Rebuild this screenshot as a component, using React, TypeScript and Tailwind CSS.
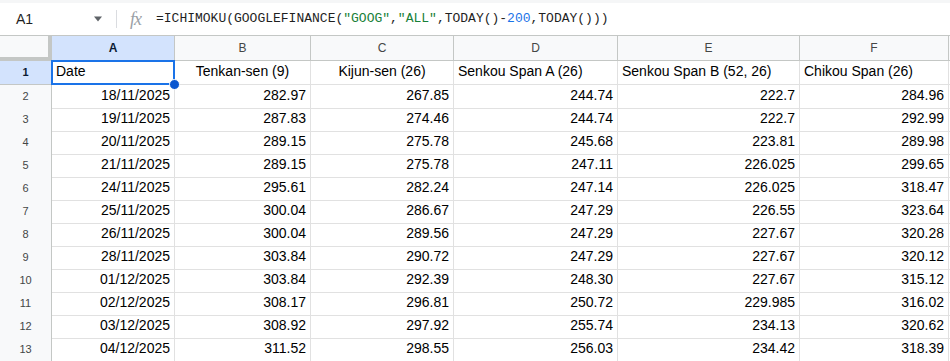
const cols = ["A", "B", "C", "D", "E", "F"];

const headers: [string, string][] = [
  ["Date", "left"],
  ["Tenkan-sen (9)", "center"],
  ["Kijun-sen (26)", "center"],
  ["Senkou Span A (26)", "left"],
  ["Senkou Span B (52, 26)", "left"],
  ["Chikou Span (26)", "left"],
];

const rows = [
  ["18/11/2025", "282.97", "267.85", "244.74", "222.7", "284.96"],
  ["19/11/2025", "287.83", "274.46", "244.74", "222.7", "292.99"],
  ["20/11/2025", "289.15", "275.78", "245.68", "223.81", "289.98"],
  ["21/11/2025", "289.15", "275.78", "247.11", "226.025", "299.65"],
  ["24/11/2025", "295.61", "282.24", "247.14", "226.025", "318.47"],
  ["25/11/2025", "300.04", "286.67", "247.29", "226.55", "323.64"],
  ["26/11/2025", "300.04", "289.56", "247.29", "227.67", "320.28"],
  ["28/11/2025", "303.84", "290.72", "247.29", "227.67", "320.12"],
  ["01/12/2025", "303.84", "292.39", "248.30", "227.67", "315.12"],
  ["02/12/2025", "308.17", "296.81", "250.72", "229.985", "316.02"],
  ["03/12/2025", "308.92", "297.92", "255.74", "234.13", "320.62"],
  ["04/12/2025", "311.52", "298.55", "256.03", "234.42", "318.39"],
];

const grid = "grid grid-cols-[52px_123px_136px_143px_164px_182px_149px_1fr]";

function FormulaBar() {
  return (
    <div className="h-[36px] bg-[#f5f6f7] pt-[3px]">
      <div className="h-[33px] bg-white border-b border-[#c4c7c5] flex items-center">
        <div className="w-[116px] flex items-center pl-[16px] pr-[13px] text-[14px] text-[#1f1f1f]">
          <span className="flex-1">A1</span>
          <svg width="10" height="6" viewBox="0 0 10 6">
            <path d="M1 0.5 L9 0.5 L5 5.5 Z" fill="#5f6368" />
          </svg>
        </div>
        <div className="w-px h-[18px] bg-[#dadce0]" />
        <span className="ml-[13px] w-[26px] text-[18px] italic text-[#9aa0a6] leading-none font-['Liberation_Serif',serif] tracking-[-1px]">
          fx
        </span>
        <span className="text-[13px] text-[#1f1f1f] font-['Liberation_Mono',monospace] whitespace-pre">
          =ICHIMOKU(GOOGLEFINANCE(
          <span className="text-[#188038]">"GOOG"</span>,
          <span className="text-[#188038]">"ALL"</span>,TODAY()-
          <span className="text-[#1a73e8]">200</span>,TODAY()))
        </span>
      </div>
    </div>
  );
}

export default function App() {
  return (
    <div className="w-[950px] h-[361px] overflow-hidden bg-white font-['Liberation_Sans',Arial,sans-serif]">
      <FormulaBar />
      <div className={grid + " h-[25px]"}>
        <div className="bg-[#f8f9fa] border-r-[4px] border-b-[4px] border-[#c4c7c5]" />
        {cols.map((c, i) => (
          <div
            key={c}
            className={
              i === 0
                ? "bg-[#d3e3fd] border-r border-b border-[#c4c7c5] flex items-center justify-center text-[12px] font-bold text-[#0b1b33]"
                : "bg-[#f8f9fa] border-r border-b border-[#c4c7c5] flex items-center justify-center text-[12px] text-[#444746]"
            }
          >
            {c}
          </div>
        ))}
        <div className="bg-[#f8f9fa] border-b border-[#c4c7c5]" />
      </div>

      <div className={grid + " h-[24px]"}>
        <div className="bg-[#d3e3fd] border-r border-b border-[#c4c7c5] flex items-center justify-center text-[11px] font-bold text-[#0b1b33]">
          1
        </div>
        {headers.map(([h, align], i) =>
          i === 0 ? (
            <div
              key={h}
              className="relative z-10 border-r border-b border-[#e1e1e1] flex items-end pb-[2px] px-[4px] text-[14px] text-black whitespace-nowrap"
            >
              {h}
              <div className="absolute top-[-1px] left-[-1px] right-[-1px] bottom-[-1px] border-2 border-[#1a73e8]" />
              <div className="absolute right-[-6px] bottom-[-6px] w-[11px] h-[11px] rounded-full bg-[#0b57d0] border border-white" />
            </div>
          ) : (
            <div
              key={h}
              className={
                "border-r border-b border-[#e1e1e1] flex items-end pb-[2px] px-[4px] text-[14px] text-black whitespace-nowrap overflow-hidden " +
                (align === "center" ? "justify-center" : "justify-start")
              }
            >
              {h}
            </div>
          )
        )}
        <div className="border-b border-[#e1e1e1]" />
      </div>

      {rows.map((r, ri) => (
        <div key={ri} className={grid + " h-[23px]"}>
          <div className="bg-[#f8f9fa] border-r border-b border-[#c4c7c5] flex items-center justify-center text-[11px] text-[#444746]">
            {ri + 2}
          </div>
          {r.map((v, ci) => (
            <div
              key={ci}
              className="border-r border-b border-[#e1e1e1] flex items-end justify-end pb-[2px] pr-[4px] text-[14px] text-black"
            >
              {v}
            </div>
          ))}
          <div className="border-b border-[#e1e1e1]" />
        </div>
      ))}
    </div>
  );
}
